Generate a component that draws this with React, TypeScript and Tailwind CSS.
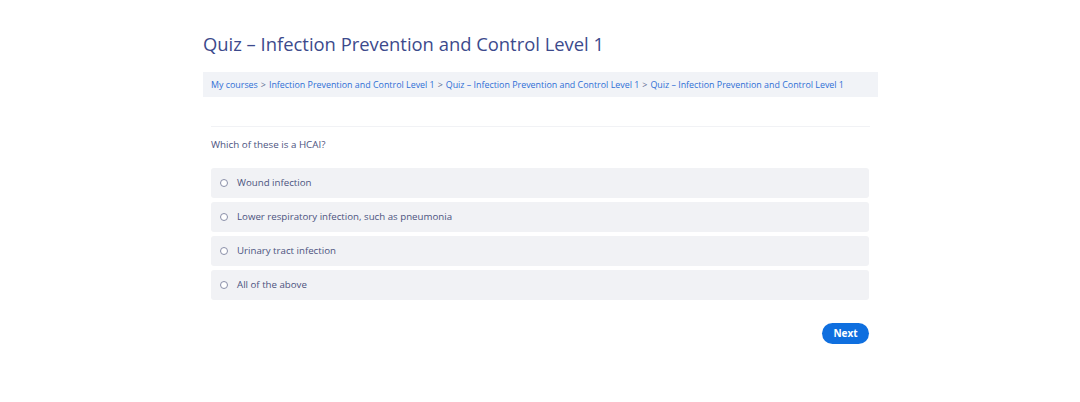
import React from 'react';

const options = [
  'Wound infection',
  'Lower respiratory infection, such as pneumonia',
  'Urinary tract infection',
  'All of the above',
];

const crumbs = [
  'My courses',
  'Infection Prevention and Control Level 1',
  'Quiz – Infection Prevention and Control Level 1',
  'Quiz – Infection Prevention and Control Level 1',
];

export default function App() {
  return (
    <div
      className="min-h-[402px] w-full bg-white"
      style={{ fontFamily: '"Open Sans", "Liberation Sans", sans-serif' }}
    >
      <div className="ml-[203px] w-[675px] pt-[33px]">
        <h1 className="text-[18.4px] leading-[22px] text-[#3c4a8c]">
          Quiz – Infection Prevention and Control Level 1
        </h1>

        <div className="mt-[17px] flex h-[25px] items-center whitespace-nowrap bg-[#f1f3f7] px-2 text-[8.9px] text-[#2f6fd6]">
          {crumbs.map((c, i) => (
            <React.Fragment key={i}>
              {i > 0 && <span className="mx-[3px] text-[#5a6a90]">&gt;</span>}
              <span>{c}</span>
            </React.Fragment>
          ))}
        </div>

        <div className="ml-2 mr-2 mt-[29px] border-t border-[#f1f2f5] pt-[11px]">
          <p className="text-[9.8px] leading-[14px] text-[#4c5380]">Which of these is a HCAI?</p>

          <div className="mt-[16px] flex flex-col gap-[4px] pr-[1px]">
            {options.map((o) => (
              <label
                key={o}
                className="flex h-[30px] items-center rounded-[3px] bg-[#f1f2f5] pl-[9px] text-[9.7px] text-[#4c5380]"
              >
                <span className="h-[8px] w-[8px] rounded-full border border-[#8a8fa8] bg-white" />
                <span className="ml-[9px]">{o}</span>
              </label>
            ))}
          </div>

          <div className="mt-[23px] flex justify-end pr-[1px]">
            <button className="h-[21px] w-[47px] rounded-full bg-[#0f6fdf] text-[10px] font-bold text-white">
              Next
            </button>
          </div>
        </div>
      </div>
    </div>
  );
}
